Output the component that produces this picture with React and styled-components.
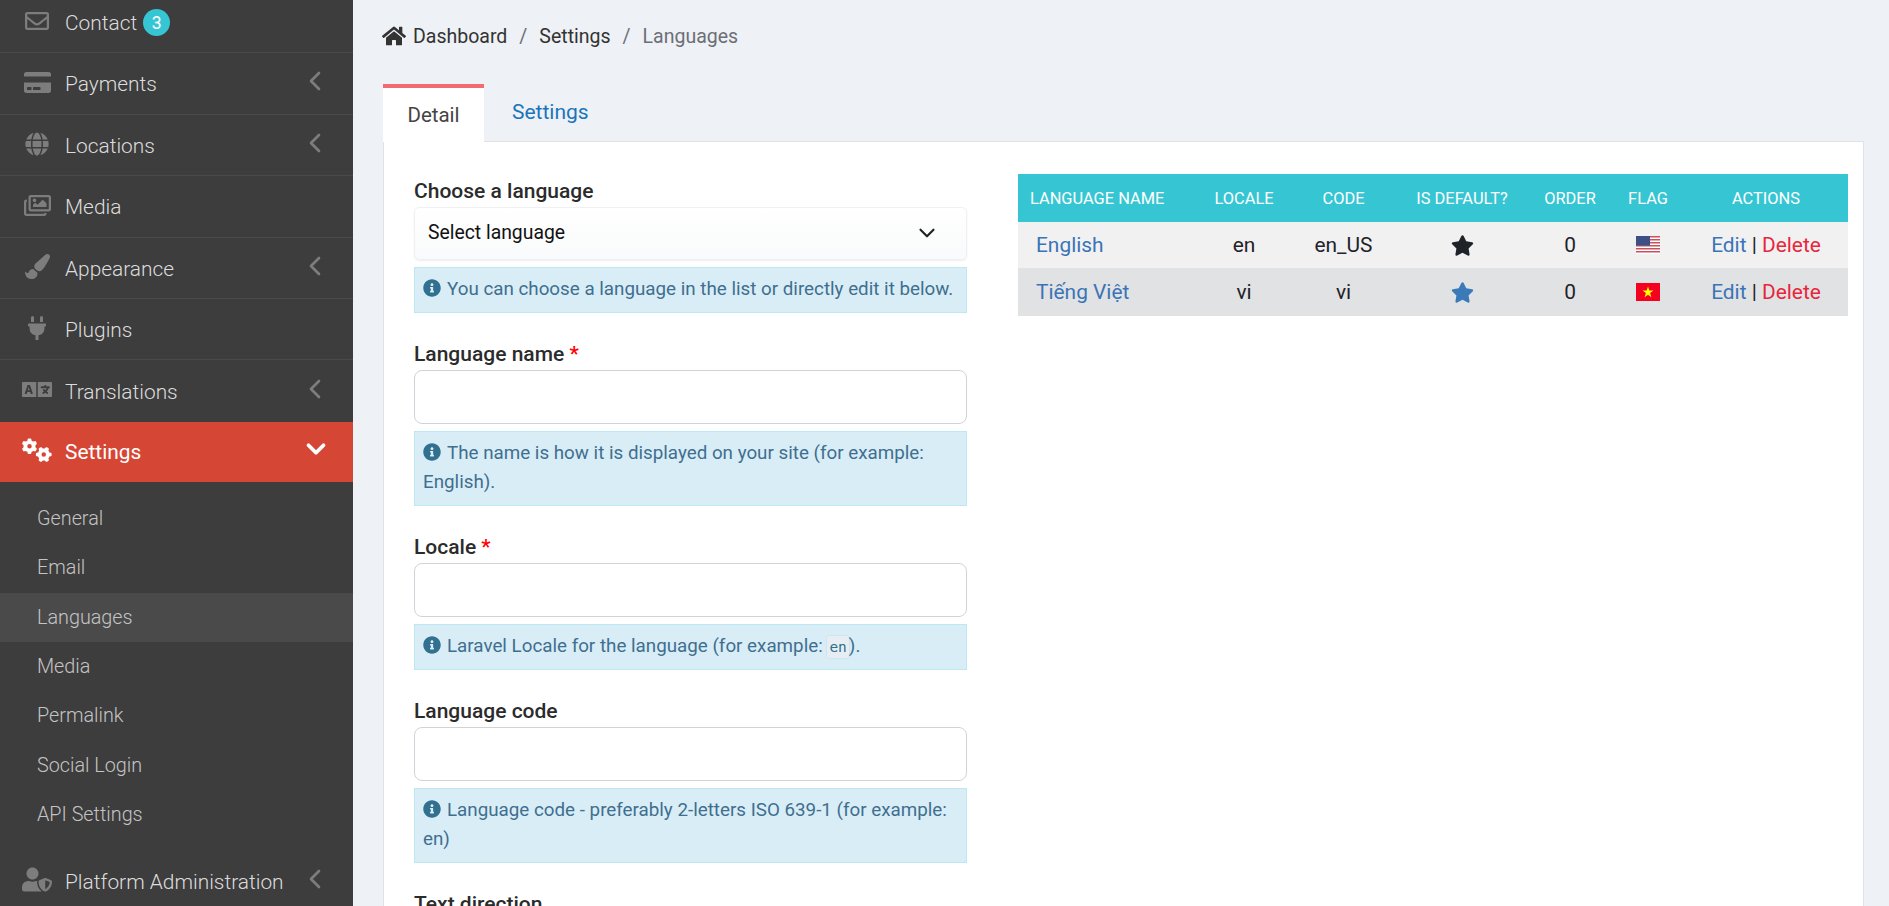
import React from "react";
import styled, { createGlobalStyle } from "styled-components";
import {
  FaRegEnvelope,
  FaCreditCard,
  FaGlobe,
  FaRegImages,
  FaPaintBrush,
  FaPlug,
  FaLanguage,
  FaUserShield,
  FaHome,
  FaInfoCircle,
  FaStar,
} from "react-icons/fa";
import { FaGears } from "react-icons/fa6";
import { ChevronDown, ChevronLeft } from "lucide-react";

const GlobalStyle = createGlobalStyle`
  html, body {
    margin: 0;
    height: 100%;
    overflow: hidden;
    background: #eef1f5;
    font-family: Roboto, "Liberation Sans", sans-serif;
    font-size: 18.8px;
  }
  * { box-sizing: border-box; }
`;

const Page = styled.div`
  display: flex;
  height: 906px;
  overflow: hidden;
`;

const Sidebar = styled.aside`
  width: 353px;
  flex: none;
  background: #3d3d3d;
  overflow: hidden;
`;

const Menu = styled.div`
  margin-top: -8px;
`;

const MenuRow = styled.div`
  display: flex;
  align-items: center;
  height: ${p => (p.$active ? "60px" : "61.4px")};
  padding: ${p => (p.$active ? "0" : "1.5px")} 22px 0;
  background: ${p => (p.$active ? "#d64635" : "transparent")};
  border-bottom: ${p => (p.$active || p.$plain ? "none" : "1px solid #4a4a4a")};
  color: ${p => (p.$active ? "#fff" : "#dcdcdc")};
  font-weight: ${p => (p.$active ? 400 : 300)};
  font-size: 20.9px;
`;

const IconSlot = styled.span`
  display: flex;
  justify-content: center;
  align-items: center;
  width: 30px;
  margin-right: 13px;
  color: ${p => (p.$active ? "#fff" : "#7d7d7d")};
  font-size: ${p => p.$size || 25}px;
  transform: translateY(-2px);
`;

const RowLabel = styled.span`
  flex: 1;
  display: flex;
  align-items: center;
  white-space: nowrap;
`;

const Badge = styled.span`
  display: inline-flex;
  align-items: center;
  justify-content: center;
  width: 27px;
  height: 27px;
  margin-left: 6px;
  border-radius: 50%;
  background: #36c6d3;
  color: #fff;
  font-size: 17.5px;
  font-weight: 400;
`;

const Arrow = styled.span`
  display: flex;
  color: ${p => (p.$active ? "#fff" : "#7d7d7d")};
  transform: translateY(-3px);
`;

const SubMenu = styled.div`
  padding: 12px 0 11px;
`;

const SubItem = styled.div`
  display: flex;
  align-items: center;
  height: 49.4px;
  padding-left: 37px;
  background: ${p => (p.$current ? "#4a4a4a" : "transparent")};
  color: #c4c4c4;
  font-size: 19.8px;
  font-weight: 300;
`;

const Main = styled.main`
  flex: 1;
  min-width: 0;
  padding: 0 25px 0 30px;
`;

const Breadcrumb = styled.nav`
  display: flex;
  align-items: center;
  height: 72px;
  color: #333;
  font-size: 19.5px;
`;

const Crumb = styled.span`
  color: ${p => (p.$muted ? "#6b6f75" : "#333")};
  white-space: nowrap;
`;

const Slash = styled.span`
  margin: 0 12px;
  color: #6b6f75;
`;

const HomeIcon = styled(FaHome)`
  font-size: 24px;
  margin-right: 7px;
  margin-left: -1px;
  color: #333;
`;

const Tabs = styled.div`
  display: flex;
  height: 58px;
  margin-top: 12px;
  position: relative;
  z-index: 1;
  margin-bottom: -1px;
`;

const ActiveTab = styled.div`
  display: flex;
  justify-content: center;
  padding-top: 15px;
  width: 101px;
  background: #fff;
  border-top: 4px solid #f36a73;
  color: #444;
  font-size: 20.5px;
`;

const Tab = styled.div`
  padding: 16px 0 0 28px;
  color: #1a75bb;
  font-size: 21px;
`;

const Panel = styled.section`
  display: grid;
  grid-template-columns: 553px 830px;
  column-gap: 51px;
  align-content: start;
  height: 800px;
  padding: 36px 0 0 30px;
  background: #fff;
  border: 1px solid #e0e2e6;
`;

const Field = styled.div`
  margin-bottom: 28px;
`;

const Label = styled.label`
  display: block;
  height: 24px;
  margin-bottom: 5px;
  color: #2b2b2b;
  font-size: 21px;
  font-weight: 500;
  line-height: 26px;
`;

const Required = styled.span`
  color: #f00;
`;

const SelectBox = styled.div`
  display: flex;
  align-items: center;
  justify-content: space-between;
  height: 52.5px;
  padding: 0 26px 1px 13px;
  background: linear-gradient(#fff, #f9fafb);
  border: 1px solid #eef0f3;
  border-radius: 5px;
  box-shadow: 0 1px 2px rgba(0, 0, 0, 0.07);
  color: #111;
  font-size: 19.35px;
`;

const TextInput = styled.input`
  display: block;
  width: 100%;
  height: 53.5px;
  padding: 0 13px;
  background: #fff;
  border: 1px solid #d0d3d9;
  border-radius: 8px;
  font: inherit;
  outline: none;
`;

const Help = styled.div`
  margin-top: 7.5px;
  padding: 7px 8px 8px;
  background: #d9edf7;
  border: 1px solid #bce8f1;
  color: #3f6f8f;
  font-size: 18.8px;
  line-height: 29px;
`;

const InfoIcon = styled(FaInfoCircle)`
  font-size: 18px;
  margin-right: 6px;
  color: #31708f;
  vertical-align: -2px;
`;

const Code = styled.code`
  padding: 3px 2px;
  background: #e6eef3;
  border-radius: 3px;
  box-shadow: 0 0 2px rgba(0, 0, 0, 0.12);
  color: #31708f;
  font-family: "DejaVu Sans Mono", monospace;
  font-size: 14.5px;
  line-height: 1;
`;

const LangTable = styled.table`
  width: 830px;
  table-layout: fixed;
  border-collapse: collapse;
  margin-top: -4px;
`;

const HeadCell = styled.th`
  height: 48px;
  padding: ${p => (p.$first ? "0 0 0 12px" : "0")};
  background: #36c6d3;
  color: #fff;
  font-size: 16.4px;
  font-weight: 400;
  text-align: ${p => (p.$first ? "left" : "center")};
  text-transform: uppercase;
  white-space: nowrap;
`;

const Row = styled.tr`
  height: ${p => (p.$odd ? "46px" : "48px")};
  background: ${p => (p.$odd ? "#f1f1f2" : "#e1e2e4")};
`;

const Cell = styled.td`
  padding: ${p => (p.$name ? "0 0 0 18px" : "0")};
  color: #1f2328;
  font-size: 20.9px;
  text-align: ${p => (p.$name ? "left" : "center")};
  white-space: nowrap;
  vertical-align: middle;
`;

const LinkText = styled.a`
  color: ${p => (p.$danger ? "#e7263c" : "#3b74b6")};
  text-decoration: none;
`;

const Star = styled(FaStar)`
  display: block;
  margin: 0 auto;
  font-size: 23px;
  color: ${p => (p.$on ? "#1f2328" : "#3a7ab9")};
`;

const FlagSvg = styled.svg`
  display: block;
  margin: 0 auto;
  width: 24px;
  height: 18px;
`;

const UsFlag = () => (
  <FlagSvg viewBox="0 0 24 18">
    <rect width="24" height="18" fill="#fff" />
    {[0, 3, 6, 9, 12, 15].map(y => (
      <rect key={y} y={y} width="24" height="1.5" fill="#c8505f" />
    ))}
    <rect width="14" height="9.5" fill="#3d4f85" />
  </FlagSvg>
);

const VnFlag = () => (
  <FlagSvg viewBox="0 0 24 18">
    <rect width="24" height="18" fill="#f5001e" />
    <polygon
      points="12,3.5 13.3,7.6 17.5,7.6 14.1,10.1 15.4,14.2 12,11.7 8.6,14.2 9.9,10.1 6.5,7.6 10.7,7.6"
      fill="#ff0"
    />
  </FlagSvg>
);

const menuTop = [
  { label: "Contact", icon: <FaRegEnvelope />, badge: 3, size: 24 },
  { label: "Payments", icon: <FaCreditCard />, arrow: true, size: 27 },
  { label: "Locations", icon: <FaGlobe />, arrow: true, size: 24 },
  { label: "Media", icon: <FaRegImages />, size: 27 },
  { label: "Appearance", icon: <FaPaintBrush />, arrow: true },
  { label: "Plugins", icon: <FaPlug />, size: 24 },
  { label: "Translations", icon: <FaLanguage />, arrow: true, size: 31, plain: true },
];

const subItems = ["General", "Email", "Languages", "Media", "Permalink", "Social Login", "API Settings"];

const columns = [179, 94, 105, 132, 84, 72, 164];
const headers = ["Language name", "Locale", "Code", "Is default?", "Order", "Flag", "Actions"];

const languages = [
  { name: "English", locale: "en", code: "en_US", isDefault: true, flag: <UsFlag /> },
  { name: "Tiếng Việt", locale: "vi", code: "vi", isDefault: false, flag: <VnFlag /> },
];

const App = () => (
  <Page>
    <GlobalStyle />
    <Sidebar>
      <Menu>
        {menuTop.map(item => (
          <MenuRow key={item.label} $plain={item.plain}>
            <IconSlot $size={item.size}>{item.icon}</IconSlot>
            <RowLabel>
              {item.label}
              {item.badge && <Badge>{item.badge}</Badge>}
            </RowLabel>
            {item.arrow && (
              <Arrow>
                <ChevronLeft size={32} strokeWidth={2} />
              </Arrow>
            )}
          </MenuRow>
        ))}
        <MenuRow $active>
          <IconSlot $active $size={30}>
            <FaGears />
          </IconSlot>
          <RowLabel>Settings</RowLabel>
          <Arrow $active>
            <ChevronDown size={30} strokeWidth={3} />
          </Arrow>
        </MenuRow>
        <SubMenu>
          {subItems.map(name => (
            <SubItem key={name} $current={name === "Languages"}>
              {name}
            </SubItem>
          ))}
        </SubMenu>
        <MenuRow $plain>
          <IconSlot $size={31}>
            <FaUserShield />
          </IconSlot>
          <RowLabel>Platform Administration</RowLabel>
          <Arrow>
            <ChevronLeft size={32} strokeWidth={2} />
          </Arrow>
        </MenuRow>
      </Menu>
    </Sidebar>

    <Main>
      <Breadcrumb>
        <HomeIcon />
        <Crumb>Dashboard</Crumb>
        <Slash>/</Slash>
        <Crumb>Settings</Crumb>
        <Slash>/</Slash>
        <Crumb $muted>Languages</Crumb>
      </Breadcrumb>

      <Tabs>
        <ActiveTab>Detail</ActiveTab>
        <Tab>Settings</Tab>
      </Tabs>

      <Panel>
        <div>
          <Field>
            <Label>Choose a language</Label>
            <SelectBox>
              Select language
              <ChevronDown size={26} color="#222" strokeWidth={2} />
            </SelectBox>
            <Help>
              <InfoIcon />
              You can choose a language in the list or directly edit it below.
            </Help>
          </Field>
          <Field>
            <Label>
              Language name <Required>*</Required>
            </Label>
            <TextInput type="text" />
            <Help>
              <InfoIcon />
              The name is how it is displayed on your site (for example: English).
            </Help>
          </Field>
          <Field>
            <Label>
              Locale <Required>*</Required>
            </Label>
            <TextInput type="text" />
            <Help>
              <InfoIcon />
              Laravel Locale for the language (for example: <Code>en</Code>).
            </Help>
          </Field>
          <Field>
            <Label>Language code</Label>
            <TextInput type="text" />
            <Help>
              <InfoIcon />
              Language code - preferably 2-letters ISO 639-1 (for example: en)
            </Help>
          </Field>
          <Field>
            <Label>Text direction</Label>
          </Field>
        </div>

        <div>
          <LangTable>
            <colgroup>
              {columns.map((w, i) => (
                <col key={i} width={w} />
              ))}
            </colgroup>
            <thead>
              <tr>
                {headers.map((h, i) => (
                  <HeadCell key={h} $first={i === 0}>
                    {h}
                  </HeadCell>
                ))}
              </tr>
            </thead>
            <tbody>
              {languages.map((lang, i) => (
                <Row key={lang.locale} $odd={i === 0}>
                  <Cell $name>
                    <LinkText>{lang.name}</LinkText>
                  </Cell>
                  <Cell>{lang.locale}</Cell>
                  <Cell>{lang.code}</Cell>
                  <Cell>
                    <Star $on={lang.isDefault} />
                  </Cell>
                  <Cell>0</Cell>
                  <Cell>{lang.flag}</Cell>
                  <Cell>
                    <LinkText>Edit</LinkText> | <LinkText $danger>Delete</LinkText>
                  </Cell>
                </Row>
              ))}
            </tbody>
          </LangTable>
        </div>
      </Panel>
    </Main>
  </Page>
);

export default App;
